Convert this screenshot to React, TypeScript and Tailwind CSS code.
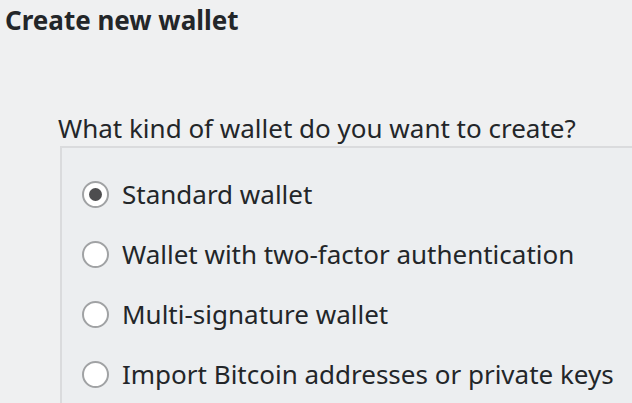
import React, { useState } from "react";

const options = [
  "Standard wallet",
  "Wallet with two-factor authentication",
  "Multi-signature wallet",
  "Import Bitcoin addresses or private keys",
];

export default function App() {
  const [selected, setSelected] = useState(0);
  return (
    <div
      className="w-[632px] h-[403px] overflow-hidden bg-[#eff0f1] text-[#232629]"
      style={{ fontFamily: '"Noto Sans", "Open Sans", sans-serif' }}
    >
      <h1 className="pl-[5px] pt-[2px] text-[26px] leading-[36px] font-bold">Create new wallet</h1>
      <div className="pl-[58px] pt-[72px]">
        <p className="text-[26px] leading-[36px]">What kind of wallet do you want to create?</p>
        <div className="ml-[2px] border-t-2 border-l-2 border-[#dadbdd] bg-[#eceef0] pt-[16px] pl-[20px] h-[300px]">
          {options.map((label, i) => (
            <label key={label} className="flex items-center h-[60px] cursor-pointer" onClick={() => setSelected(i)}>
              <span className="w-[27px] h-[27px] rounded-full border-2 border-[#a0a2a4] bg-white flex items-center justify-center">
                {selected === i && <span className="w-[13px] h-[13px] rounded-full bg-[#4d4d4f]" />}
              </span>
              <span className="ml-[13px] text-[26px] leading-[36px]">{label}</span>
            </label>
          ))}
        </div>
      </div>
    </div>
  );
}
